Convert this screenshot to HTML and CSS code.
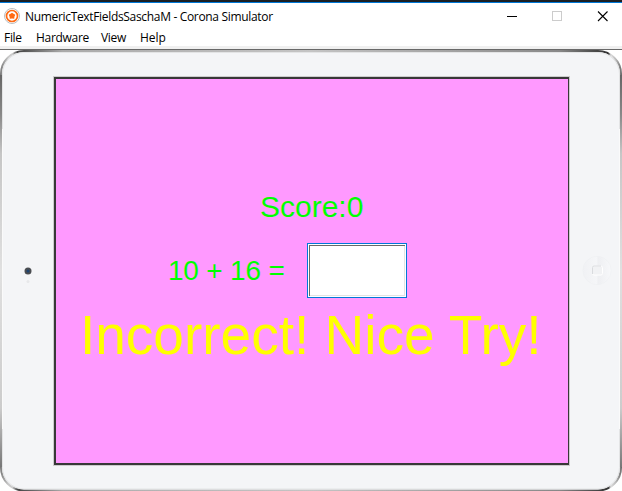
FILE: index.html
```
<!DOCTYPE html>
<html lang="en">
<head>
<meta charset="utf-8">
<title>NumericTextFieldsSaschaM - Corona Simulator</title>
<link rel="stylesheet" href="styles.css">
</head>
<body>
<div class="window">
  <header class="titlebar">
    <svg class="logo" width="16" height="16" viewBox="0 0 16 16">
      <circle cx="8" cy="8" r="7.5" fill="#fff" stroke="#b9bec2" stroke-width="1"/>
      <circle cx="8" cy="8" r="5.5" fill="#fff" stroke="#ff6a13" stroke-width="1.7"/>
      <path d="M8 4.800 9.500 5.800 11.300 6.700 10.500 8.600 10.200 10.700 8 10.500 5.800 10.700 5.500 8.600 4.700 6.700 6.500 5.800Z" fill="#ff6a13"/>
    </svg>
    <h1 class="title">NumericTextFieldsSaschaM - Corona Simulator</h1>
    <svg class="controls" width="102" height="11" viewBox="0 0 102 11" fill="none" shape-rendering="crispEdges">
      <path d="M0 5.5H10" stroke="#000"/>
      <rect x="45.5" y=".5" width="9" height="9" stroke="#ccc"/>
      <path d="M91 .5 100.500 10M100.500 .5 91 10" stroke="#000" shape-rendering="auto" stroke-width="1.1"/>
    </svg>
  </header>
  <nav class="menu">
    <span class="file">File</span><span class="hardware">Hardware</span><span class="view">View</span><span class="help">Help</span>
  </nav>
  <main class="device">
    <svg class="frame" width="622" height="442" viewBox="0 0 622 442">
      <defs>
        <linearGradient id="edge" gradientUnits="userSpaceOnUse" x1="0" y1="0" x2="622" y2="0">
          <stop offset="0" stop-color="#777"/><stop offset=".013" stop-color="#c8c8c8"/>
          <stop offset=".02" stop-color="#ccc"/>
          <stop offset=".028" stop-color="#444"/><stop offset=".1" stop-color="#aaa"/>
          <stop offset=".5" stop-color="#c4c4c4"/><stop offset=".9" stop-color="#888"/>
          <stop offset=".978" stop-color="#333"/><stop offset=".982" stop-color="#ddd"/>
          <stop offset=".99" stop-color="#bbb"/><stop offset="1" stop-color="#666"/>
        </linearGradient>
        <linearGradient id="side" gradientUnits="userSpaceOnUse" x1="0" y1="26" x2="0" y2="418">
          <stop offset="0" stop-color="#666"/><stop offset=".1" stop-color="#888"/>
          <stop offset=".2" stop-color="#c6c6c6"/><stop offset=".5" stop-color="#e0e0e0"/>
          <stop offset=".85" stop-color="#ccc"/><stop offset="1" stop-color="#777"/>
        </linearGradient>
        <linearGradient id="knob" x1="0" x2="1">
          <stop offset="0" stop-color="#f0f1f4"/><stop offset=".5" stop-color="#f5f6f8"/>
          <stop offset=".53" stop-color="#eeeff2"/><stop offset="1" stop-color="#f7f8fa"/>
        </linearGradient>
      </defs>
      <rect x="1" y="2" width="620" height="439.500" rx="23" fill="#f4f5f7" stroke="url(#edge)" stroke-width="2"/>
      <rect x="2.500" y="3.500" width="617" height="436.500" rx="21.500" fill="none" stroke="#e3e4e5"/>
      <rect x="0" y="26" width="2" height="392" fill="url(#side)"/>
      <rect x="2" y="80" width="1" height="300" fill="#fafafa"/>
      <rect x="619" y="80" width="1" height="300" fill="#fafafa"/>
      <rect x="620" y="26" width="2" height="392" fill="url(#side)"/>
      <circle cx="28" cy="222" r="3.500" fill="#4a4d51"/>
      <circle cx="28" cy="222" r="1.500" fill="#1d4370"/>
      <circle cx="28" cy="232.500" r="1.500" fill="#e7e8ea"/>
      <circle cx="597" cy="221.500" r="14.200" fill="url(#knob)" stroke="#eceef0" stroke-width=".5"/>
      <rect x="592.500" y="217" width="10" height="9" rx="1.500" fill="#f1f2f4" stroke="#fff"/>
      <path d="M592.500 225V218.500Q592.500 217 594 217H601" fill="none" stroke="#d9dbde"/>
    </svg>
    <section class="screen">
      <p class="score">Score:0</p>
      <div class="question">
        <span class="sum">10 + 16 =</span>
        <input class="answer" type="text" aria-label="Answer">
      </div>
      <p class="feedback">Incorrect! Nice Try!</p>
    </section>
  </main>
</div>
</body>
</html>
```
FILE: styles.css
```
* { box-sizing: border-box; }
body { margin: 0; overflow: hidden; background: #fff; }
.window {
  width: 622px;
  height: 491px;
  display: flex;
  flex-direction: column;
  border-top: 2px solid #1b1f24;
  font-family: "Open Sans", "Noto Sans", sans-serif;
  font-size: 12px;
  color: #000;
}
.titlebar {
  height: 27px;
  flex: none;
  display: flex;
  align-items: center;
  border-top: 1px solid #0078d7;
  padding: 0 13px 0 4px;
}
.logo { flex: none; }
.title {
  margin: 0 0 0 5px;
  font-size: 12px;
  font-weight: 400;
  letter-spacing: -.325px;
  white-space: nowrap;
}
.controls { margin-left: auto; }
.menu {
  height: 20px;
  flex: none;
  display: flex;
  align-items: flex-start;
  border-bottom: 3px solid #f0f0f0;
  padding-left: 4px;
  line-height: 17px;
  letter-spacing: -.3px;
}
.file { width: 32px; }
.hardware { width: 65px; }
.view { width: 39px; }
.help { letter-spacing: 0; }
.device {
  position: relative;
  flex: 1;
  border-top: 1px solid #696969;
  padding: 27px 53px 26px 54px;
}
.frame { position: absolute; left: 0; top: -1px; }
.screen {
  position: relative;
  width: 515px;
  height: 388px;
  border: 2px solid #383838;
  border-right-width: 1px;
  background: #f9f;
  box-shadow: 0 0 0 1px #ccc;
  font-family: "Liberation Sans", Arial, sans-serif;
  color: #0f0;
  padding-top: 111px;
}
.score {
  margin: 0 0 0 204px;
  font-size: 30px;
  line-height: 34px;
}
.question {
  display: flex;
  margin: 19px 0 0 112px;
  height: 55px;
}
.sum {
  width: 139px;
  font-size: 28px;
  letter-spacing: -.2px;
  line-height: 55px;
  white-space: nowrap;
}
.answer {
  width: 100px;
  height: 55px;
  border: 1px solid #0078d7;
  border-radius: 0;
  outline: none;
  background: #fff;
  box-shadow: inset 0 0 0 1px #fff, inset 2px 2px 0 #696969, inset -2px -2px 0 #e3e3e3;
}
.feedback {
  margin: 6px 0 0 24px;
  font-size: 55px;
  line-height: 62px;
  white-space: nowrap;
  color: #ff0;
}
```
